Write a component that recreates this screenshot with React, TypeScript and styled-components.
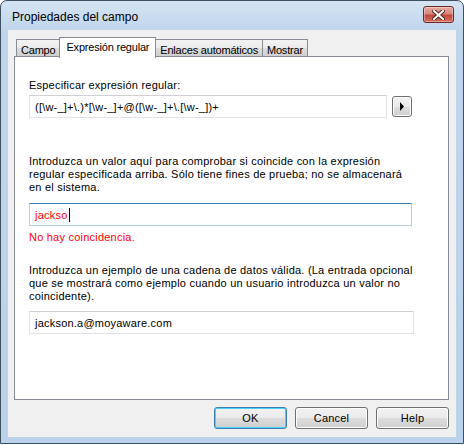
import * as React from "react"
import styled, { createGlobalStyle } from "styled-components"

const GlobalStyle = createGlobalStyle`
  html, body {
    margin: 0;
    padding: 0;
    background: #ffffff;
  }
  body {
    font-family: "Liberation Sans", Tahoma, sans-serif;
    font-size: 11px;
    letter-spacing: 0.22px;
    color: #000000;
  }
`

const Window = styled.div`
  width: 464px;
  height: 444px;
  box-sizing: border-box;
  border: 1px solid #3e4f60;
  border-radius: 7px 7px 0 0;
  background: linear-gradient(to bottom, #d5e4f3 0px, #bfd5ec 30px, #bad2ea 100%);
  display: flex;
  flex-direction: column;
  overflow: hidden;
`

const TitleBar = styled.div`
  height: 29px;
  display: flex;
  align-items: center;
  justify-content: space-between;
  padding: 0 9px 0 11px;
`

const Title = styled.span`
  font-size: 12px;
  letter-spacing: 0;
  color: #000000;
  padding-top: 2px;
`

const CloseButton = styled.div`
  width: 29px;
  height: 15px;
  border: 1px solid #6d2a25;
  border-radius: 3px;
  background: linear-gradient(to bottom, #e8aca4 0%, #d8867b 45%, #c5493c 55%, #d3705f 100%);
  box-shadow: inset 0 0 0 1px rgba(255, 255, 255, 0.35);
  display: flex;
  align-items: center;
  justify-content: center;
  margin-top: -2px;
`

const Client = styled.div`
  flex: 1;
  margin: 0 7px 6px 7px;
  background: #f0f0f0;
  padding: 7px 6px 0 6px;
  display: flex;
  flex-direction: column;
`

const TabRow = styled.div`
  display: flex;
  align-items: flex-end;
  padding-left: 2px;
  position: relative;
  z-index: 1;
`

const Tab = styled.div<{ $active?: boolean }>`
  box-sizing: border-box;
  height: ${p => (p.$active ? "21px" : "18px")};
  margin-bottom: ${p => (p.$active ? "-1px" : "0")};
  padding: ${p => (p.$active ? "3px 6px 0 6px" : "4px 4px 0 4px")};
  border: 1px solid #898c95;
  border-bottom: ${p => (p.$active ? "none" : "1px solid #898c95")};
  margin-left: -1px;
  letter-spacing: -0.2px;
  background: ${p =>
    p.$active ? "#ffffff" : "linear-gradient(to bottom, #f3f3f3 0%, #ebebeb 50%, #dddddd 51%, #cfcfcf 100%)"};
  white-space: nowrap;
  &:first-child {
    margin-left: 0;
  }
`

const Pane = styled.div`
  box-sizing: border-box;
  width: 435px;
  height: 344px;
  border: 1px solid #898c95;
  margin-top: -1px;
  background: #ffffff;
  padding: 22px 0 0 14px;
`

const Label = styled.div<{ $top?: number; $color?: string }>`
  line-height: 13px;
  margin-top: ${p => p.$top ?? 0}px;
  color: ${p => p.$color ?? "#000000"};
`

const FieldRow = styled.div<{ $top?: number }>`
  display: flex;
  align-items: center;
  gap: 5px;
  margin-top: ${p => p.$top ?? 0}px;
`

const TextBox = styled.div<{ $width: number; $focused?: boolean; $color?: string }>`
  box-sizing: border-box;
  width: ${p => p.$width}px;
  height: 23px;
  border: 1px solid ${p => (p.$focused ? "#b5cfe7" : "#e2e3ea")};
  border-top-color: ${p => (p.$focused ? "#3d7bad" : "#d0d0d5")};
  background: #ffffff;
  color: ${p => p.$color ?? "#000000"};
  padding: 0 0 0 5px;
  display: flex;
  align-items: center;
  white-space: nowrap;
`

const Caret = styled.span`
  display: inline-block;
  width: 1px;
  height: 14px;
  background: #000000;
  margin-left: 1px;
`

const ArrowButton = styled.div`
  box-sizing: border-box;
  width: 20px;
  height: 21px;
  border: 1px solid #707070;
  border-radius: 3px;
  background: linear-gradient(to bottom, #f2f2f2 0%, #ebebeb 50%, #dddddd 51%, #cfcfcf 100%);
  box-shadow: inset 0 0 0 1px #fcfcfc;
  display: flex;
  align-items: center;
  justify-content: center;
`

const ButtonBar = styled.div`
  display: flex;
  justify-content: flex-end;
  gap: 8px;
  width: 435px;
  margin-top: 7px;
`

const Button = styled.div<{ $default?: boolean }>`
  box-sizing: border-box;
  width: 73px;
  height: 22px;
  border: 1px solid ${p => (p.$default ? "#3c7fb1" : "#707070")};
  border-radius: 3px;
  background: linear-gradient(to bottom, #f2f2f2 0%, #ebebeb 50%, #dddddd 51%, #cfcfcf 100%);
  box-shadow: inset 0 0 0 1px ${p => (p.$default ? "#48d0f8" : "#fcfcfc")};
  display: flex;
  align-items: center;
  justify-content: center;
  font-size: 11px;
`

export default function App() {
  return (
    <>
      <GlobalStyle />
      <Window>
        <TitleBar>
          <Title>Propiedades del campo</Title>
          <CloseButton>
            <svg width="13" height="10" viewBox="0 0 13 10">
              <path
                d="M2 1 L11 9 M11 1 L2 9"
                stroke="#5a2a26"
                strokeWidth="4"
                strokeLinecap="square"
              />
              <path
                d="M2 1 L11 9 M11 1 L2 9"
                stroke="#ffffff"
                strokeWidth="2"
                strokeLinecap="square"
              />
            </svg>
          </CloseButton>
        </TitleBar>
        <Client>
          <TabRow>
            <Tab>Campo</Tab>
            <Tab $active>Expresión regular</Tab>
            <Tab>Enlaces automáticos</Tab>
            <Tab>Mostrar</Tab>
          </TabRow>
          <Pane>
            <Label>Especificar expresión regular:</Label>
            <FieldRow $top={3}>
              <TextBox $width={358}>([\w-_]+\.)*[\w-_]+@([\w-_]+\.[\w-_])+</TextBox>
              <ArrowButton>
                <svg width="6" height="9" viewBox="0 0 6 9">
                  <path d="M1 0 L5 4.5 L1 9 Z" fill="#000000" />
                </svg>
              </ArrowButton>
            </FieldRow>
            <Label $top={37}>
              Introduzca un valor aquí para comprobar si coincide con la expresión
              <br />
              regular especificada arriba. Sólo tiene fines de prueba; no se almacenará
              <br />
              en el sistema.
            </Label>
            <FieldRow $top={9}>
              <TextBox $width={383} $focused $color="#ff0000">
                jackso
                <Caret />
              </TextBox>
            </FieldRow>
            <Label $top={5} $color="#ff0000">
              No hay coincidencia.
            </Label>
            <Label $top={20}>
              Introduzca un ejemplo de una cadena de datos válida. (La entrada opcional
              <br />
              que se mostrará como ejemplo cuando un usuario introduzca un valor no
              <br />
              coincidente).
            </Label>
            <FieldRow $top={8}>
              <TextBox $width={385}>jackson.a@moyaware.com</TextBox>
            </FieldRow>
          </Pane>
          <ButtonBar>
            <Button $default>OK</Button>
            <Button>Cancel</Button>
            <Button>Help</Button>
          </ButtonBar>
        </Client>
      </Window>
    </>
  )
}
